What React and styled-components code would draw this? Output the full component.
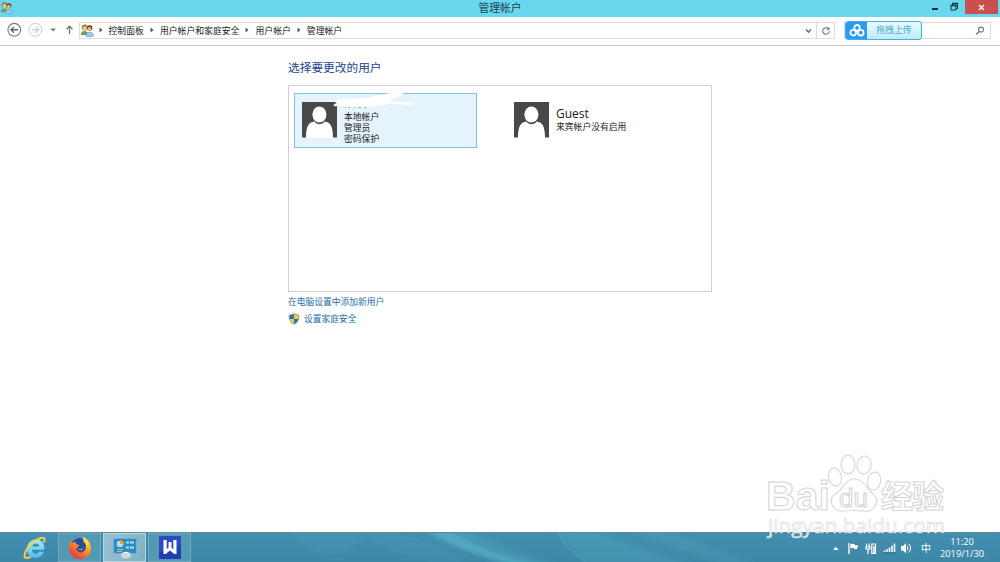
import React from 'react';
import styled, { createGlobalStyle } from 'styled-components';

const CRUMBS = ['控制面板', '用户帐户和家庭安全', '用户帐户', '管理帐户'];

export default function App() {
	return (
		<>
			<GlobalStyle />
			<Desktop>
				<TitleBar>
					<TitleIcon>
						<UsersIcon size={12} />
					</TitleIcon>
					<Title>管理帐户</Title>
					<WindowControls />
				</TitleBar>

				<NavBar>
					<NavButtons />
					<AddressBar>
						<Crumbs>
							<UsersIcon size={13} />
							{CRUMBS.map((crumb) => (
								<Crumb key={crumb}>
									<CrumbArrow viewBox='0 0 4 6'>
										<path d='M.5 .5L3.5 3L.5 5.5Z' />
									</CrumbArrow>
									{crumb}
								</Crumb>
							))}
						</Crumbs>
						<AddressButton $width={15}>
							<svg width='7' height='6' viewBox='0 0 7 6'>
								<path
									d='M1 1.5L3.5 4.2L6 1.5'
									fill='none'
									stroke='#666'
									strokeWidth='1.4'
								/>
							</svg>
						</AddressButton>
						<AddressButton $width={18} $divided>
							<svg width='10' height='10' viewBox='0 0 10 10'>
								<path
									d='M7.3 2.6A3.3 3.3 0 1 0 8.3 5'
									fill='none'
									stroke='#777'
									strokeWidth='1.1'
								/>
								<path d='M8.5 .8V4H5.4Z' fill='#777' />
							</svg>
						</AddressButton>
					</AddressBar>
					<SearchBox>
						<Upload>
							<UploadIcon>
								<svg width='16' height='13' viewBox='0 0 16 13'>
									<g fill='none' stroke='#fff' strokeWidth='1.8'>
										<circle cx='8' cy='3.8' r='2.8' />
										<circle cx='4.2' cy='8.7' r='2.8' />
										<circle cx='11.8' cy='8.7' r='2.8' />
									</g>
									<circle cx='8' cy='7.6' r='1' fill='#fff' />
								</svg>
							</UploadIcon>
							<UploadLabel>拖拽上传</UploadLabel>
						</Upload>
						<svg width='10' height='10' viewBox='0 0 10 10'>
							<circle
								cx='6'
								cy='3.6'
								r='2.5'
								fill='none'
								stroke='#777'
								strokeWidth='1.1'
							/>
							<path d='M4.1 5.5L1.2 8.6' stroke='#777' strokeWidth='1.5' />
						</svg>
					</SearchBox>
				</NavBar>

				<Content>
					<Heading>选择要更改的用户</Heading>
					<AccountList>
						<Account $selected>
							<Avatar />
							<AccountInfo $top={9}>
								<p>本地帐户</p>
								<p>管理员</p>
								<p>密码保护</p>
							</AccountInfo>
							<Scribble />
						</Account>
						<Account>
							<Avatar />
							<AccountInfo $top={4}>
								<AccountName>Guest</AccountName>
								<p>来宾帐户没有启用</p>
							</AccountInfo>
						</Account>
					</AccountList>
					<Link>在电脑设置中添加新用户</Link>
					<Link>
						<ShieldIcon />
						设置家庭安全
					</Link>
				</Content>

				<Taskbar>
					<TaskbarGlow />
					<TaskButton>
						<ExplorerIcon />
					</TaskButton>
					<TaskButton $open>
						<FirefoxIcon />
					</TaskButton>
					<TaskButton $open $active>
						<ControlPanelIcon />
					</TaskButton>
					<TaskButton $open>
						<WriterIcon />
					</TaskButton>
					<Tray>
						<TrayIcons />
						<Ime>中</Ime>
						<Clock>
							<span>11:20</span>
							<span>2019/1/30</span>
						</Clock>
					</Tray>
				</Taskbar>
				<Watermark />
			</Desktop>
		</>
	);
}

function UsersIcon({ size }) {
	return (
		<svg width={size} height={size} viewBox='0 0 13 13'>
			<path d='M0 10C0 6 7 6 7 10V11H0Z' fill='#6f9e54' />
			<circle cx='3.8' cy='3.4' r='3' fill='#9b7638' />
			<circle cx='3.8' cy='4.3' r='2.1' fill='#eccb8c' />
			<circle cx='8.7' cy='4' r='2.7' fill='#6d3f29' />
			<circle cx='8.4' cy='4.9' r='1.9' fill='#e7b78a' />
			<path
				d='M4.7 11.7C5 7.2 12.5 7 12.7 11.7L11.5 12.7H6Z'
				fill='#9bcbed'
				stroke='#5b91b8'
				strokeWidth='.6'
			/>
		</svg>
	);
}

function WindowControls() {
	return (
		<Controls>
			<svg width='6' height='13' viewBox='0 0 6 13'>
				<path d='M0 9H6' stroke='#17343c' strokeWidth='2' />
			</svg>
			<svg width='9' height='13' viewBox='0 0 9 13'>
				<path
					d='M2.5 5V3.5H7.5V8.5H6M1 5.5H6V10H1Z'
					fill='none'
					stroke='#17343c'
				/>
				<path d='M.5 5.5H6.5M2 3.5H8' stroke='#17343c' strokeWidth='1.3' />
			</svg>
			<CloseButton>
				<svg width='7' height='7' viewBox='0 0 7 7'>
					<path d='M1 1L6 6M6 1L1 6' stroke='#fff' strokeWidth='1.4' />
				</svg>
			</CloseButton>
		</Controls>
	);
}

function NavButtons() {
	return (
		<svg width='79' height='28' viewBox='0 0 79 28' fill='none'>
			<circle cx='14.3' cy='12.8' r='6.4' stroke='#777' strokeWidth='1.1' />
			<path
				d='M18 12.8H11.4M14 9.9L11 12.8L14 15.7'
				stroke='#666'
				strokeWidth='1.4'
			/>
			<circle cx='35.3' cy='12.8' r='6.4' stroke='#ccc' />
			<path
				d='M31.7 12.8H38.2M35.6 9.9L38.6 12.8L35.6 15.7'
				stroke='#ccc'
				strokeWidth='1.3'
			/>
			<path d='M50.3 11.5H56L53.1 14.4Z' fill='#777' />
			<path
				d='M69.5 17.3V9.5M66.5 12.3L69.5 9.2L72.5 12.3'
				stroke='#777'
				strokeWidth='1.3'
			/>
		</svg>
	);
}

function Avatar() {
	return (
		<svg width='35' height='36' viewBox='0 0 35 36'>
			<path d='M0 0H35V35.5H0Z' fill='#484848' />
			<path
				d='M4 36C4 25 6 20.3 12.5 19.5C15 23 20 23 22.7 19.5C29 20.3 31 25 31 36Z'
				fill='#fff'
			/>
			<ellipse cx='17.4' cy='12.5' rx='7' ry='8.1' fill='#fff' />
		</svg>
	);
}

function Scribble() {
	return (
		<ScribbleSvg width='84' height='20' viewBox='0 0 84 20'>
			<path
				d='M3 15L20 14L52 12L80 14'
				fill='none'
				stroke='#fff'
				strokeWidth='2.5'
				strokeLinecap='round'
			/>
			<path
				d='M7 9L35 8L58 3L71 2V5L60 9L58 14L35 17L7 16L3 12Z'
				fill='#fff'
			/>
			<path
				d='M13 17.5H14M17 17.5H18M22 17.5H23M26 17.5H29M32 17.5H34'
				stroke='#9da4a8'
			/>
		</ScribbleSvg>
	);
}

function ShieldIcon() {
	return (
		<svg width='12' height='12' viewBox='0 0 12 12'>
			<path
				d='M6 .3L11.3 2C11.5 7 10 10 6 11.8C2 10 .5 7 .7 2Z'
				fill='#8b9eaa'
			/>
			<path d='M6 1.2L1.6 2.5L1.7 6H6Z' fill='#2872b8' />
			<path d='M6 1.2L10.4 2.5L10.3 6H6Z' fill='#f3cf3c' />
			<path d='M1.7 6H6V10.8C3.5 9.5 2.1 8 1.7 6Z' fill='#f3cf3c' />
			<path d='M10.3 6H6V10.8C8.5 9.5 9.9 8 10.3 6Z' fill='#2872b8' />
		</svg>
	);
}

function ExplorerIcon() {
	return (
		<svg width='24' height='24' viewBox='0 0 24 24'>
			<defs>
				<linearGradient id='ie' x1='0' y1='0' x2='0' y2='1'>
					<stop offset='0' stopColor='#a5ecff' />
					<stop offset='1' stopColor='#4fbcf0' />
				</linearGradient>
			</defs>
			<path
				fillRule='evenodd'
				d='M21.3 13.7H9C9.3 18.4 14.4 19 16.2 15.8H20.9C18.9 20.6 15.4 22 12 21.7C6.7 21.2 3.8 17.4 4 12.7C4.3 7 8.1 3.6 13 3.6C18.5 3.6 21.8 7.5 21.3 13.7ZM9.2 10.5H16.5C16.2 6.6 9.8 6.4 9.2 10.5Z'
				fill='url(#ie)'
			/>
			<path
				d='M20.5 6.5C23.8 1.5 19.8 .5 14.3 3.4C7.8 6.8 1.8 14.7 1.5 19.5C1.4 22.8 5 22.4 8.3 20.5'
				fill='none'
				stroke='#f6cf42'
				strokeWidth='1.9'
			/>
		</svg>
	);
}

function FirefoxIcon() {
	return (
		<svg width='24' height='24' viewBox='0 0 24 24'>
			<defs>
				<linearGradient id='fox' x1='.9' y1='0' x2='.2' y2='1'>
					<stop offset='0' stopColor='#ffe14a' />
					<stop offset='.45' stopColor='#ff9a20' />
					<stop offset='1' stopColor='#e9244d' />
				</linearGradient>
			</defs>
			<circle cx='12' cy='11.5' r='9.5' fill='#264d9b' />
			<path
				d='M2 5L4.6 7L7 5.5L8 8L11.5 9.3L9.2 11.5L8.2 13C9.5 17.3 15 17.8 17.2 13.7C19 9.8 17.3 7.5 15.5 5.8L15 1C21.5 3.7 23.4 9 22.8 14C21.7 20 16.9 23 12 23C5.6 23 1 18.2 1 12C1 9 1.2 7 2 5Z'
				fill='url(#fox)'
			/>
			<path d='M15 1C14.4 5 19.8 6.5 18.8 12C23 9 20.5 3.4 15 1Z' fill='#ffdc42' />
			<path
				d='M9.6 12.3L12 13.2L15.2 12.2C14.3 14.5 11 15.3 9.6 12.3Z'
				fill='#ff9425'
			/>
		</svg>
	);
}

function ControlPanelIcon() {
	return (
		<svg width='24' height='22' viewBox='0 0 24 22'>
			<rect x='.5' y='1.5' width='23' height='15' rx='1' fill='#328bc0' stroke='#68b2da' />
			<circle cx='7' cy='7' r='3.3' fill='#b9dcec' />
			<path d='M7 7V3.2A3.6 3.6 0 0 1 10.7 7Z' fill='#ff9d28' />
			<path
				d='M13 5.5H16M17 5.5H21M13 10.5H16M17 10.5H21'
				stroke='#a6e3fa'
				strokeWidth='2'
			/>
			<path d='M4 12.5H10' stroke='#92cbe7' />
			<path d='M4 14.5H9' stroke='#efb344' />
			<ellipse cx='12.8' cy='18.3' rx='5' ry='3.3' fill='#d2d7da' />
			<path d='M9 17C11 14.5 15 15 16.5 17' fill='none' stroke='#fff' />
		</svg>
	);
}

function WriterIcon() {
	return (
		<svg width='22' height='23' viewBox='0 0 22 23'>
			<path d='M0 0H22V23H0Z' fill='#213fb0' />
			<path d='M0 0H22V10L0 16Z' fill='#2c4bc1' />
			<path
				d='M4.5 4H7.7V13.2L9.5 11.8V6H12.5V11.8L14.3 13.2V4H17.5V18H15.3L11 14.5L6.7 18H4.5Z'
				fill='#fff'
			/>
		</svg>
	);
}

function TrayIcons() {
	return (
		<svg width='80' height='16' viewBox='832 540 80 16'>
			<path d='M833 550L835.8 546.8L838.6 550Z' fill='#fff' />
			<path d='M849 543V554' stroke='#fff' strokeWidth='1.4' />
			<path
				d='M850 543.5H855V545H859L857.5 548L858 549.5H854V548.5H850Z'
				fill='#fff'
				stroke='#285c70'
				strokeWidth='.5'
			/>
			<g fill='none' stroke='#fff' strokeWidth='1.2'>
				<path d='M866.5 543.5V547M869 543.5V547M865.3 547H870V549H866V547M868 549V554' />
				<path d='M871.8 544H875.5V553.5H871.8Z' />
			</g>
			<path d='M873 546H875V553H873Z' fill='#d5e3e8' />
			<path
				d='M884.5 552V550.5M887 552V549M889.5 552V547.5M892 552V545.5M894.5 552V543.5'
				stroke='#e7f3f7'
				strokeWidth='1.7'
			/>
			<path d='M883 553H896' stroke='#285c70' strokeWidth='.6' />
			<path d='M901 546H903L906 543V553.5L903 550.5H901Z' fill='#fff' />
			<path
				d='M907.2 546Q909 548.2 907.2 550.5M908.8 544Q912.5 548.3 908.8 552.5'
				fill='none'
				stroke='#fff'
			/>
		</svg>
	);
}

function TaskbarGlow() {
	return (
		<GlowSvg viewBox='0 0 1000 29' preserveAspectRatio='none'>
			<defs>
				<filter id='soft' x='-20%' y='-20%' width='140%' height='140%'>
					<feGaussianBlur stdDeviation='2' />
				</filter>
			</defs>
			<g fill='#55b2c7' filter='url(#soft)'>
				<path d='M425 -3H446C474 12 504 24 543 32H513C477 23 445 10 425 -3Z' opacity='.75' />
				<path d='M442 -3H470C495 12 530 25 562 32H543C502 20 475 10 442 -3Z' opacity='.25' />
				<path d='M554 -3H595C630 12 660 24 700 32H588Z' opacity='.25' />
				<path d='M625 -3H665L760 32H720Z' opacity='.15' />
			</g>
			<path d='M290 0Q333 43 367 0Z' fill='#52a8c8' opacity='.15' />
			<path d='M365 0Q386 20 430 29H464Q440 10 396 0Z' fill='#52a8c8' opacity='.15' />
			<path d='M558 0Q565 15 586 29' stroke='#79c1d1' opacity='.4' fill='none' />
		</GlowSvg>
	);
}

function Watermark() {
	return (
		<WatermarkSvg width='190' height='90' viewBox='760 450 190 90'>
			<g fill='#fff' fillOpacity='.8' stroke='#d9d9d9' strokeWidth='1.2'>
				<ellipse cx='835' cy='477' rx='6.5' ry='9' transform='rotate(-12 835 477)' />
				<ellipse cx='848' cy='464.5' rx='7' ry='9.3' />
				<ellipse cx='864' cy='465' rx='7' ry='9' transform='rotate(10 864 465)' />
				<ellipse cx='874' cy='481' rx='6.7' ry='9' transform='rotate(12 874 481)' />
				<path d='M853 479C861 478 865 485 870 491C877 497 879 501 874 508C870 513 864 511 854 510C844 511 837 513 833 507C829 499 832 496 839 491C843 487 846 480 853 479Z' />
			</g>
			<WatermarkText x='766' y='510' fontSize='41' textLength='64'>
				Bai
			</WatermarkText>
			<WatermarkText x='839' y='507' fontSize='26' textLength='29' $thin>
				du
			</WatermarkText>
			<WatermarkText x='881' y='508' fontSize='32' textLength='63' $cjk>
				经验
			</WatermarkText>
			<WatermarkUrl x='768' y='533' textLength='177' lengthAdjust='spacingAndGlyphs'>
				jingyan.baidu.com
			</WatermarkUrl>
		</WatermarkSvg>
	);
}

const GlobalStyle = createGlobalStyle`
	* {
		box-sizing: border-box;
	}

	body {
		margin: 0;
		font-family: 'Noto Sans', 'Noto Sans CJK SC', sans-serif;
	}

	p {
		margin: 0;
	}

	svg {
		display: block;
		flex-shrink: 0;
	}
`;

const Desktop = styled.div`
	position: relative;
	display: flex;
	flex-direction: column;
	width: 1000px;
	height: 562px;
	overflow: hidden;
	background: #fff;
`;

const TitleBar = styled.header`
	display: grid;
	grid-template-columns: 1fr auto 1fr;
	height: 17px;
	background: #69d8ee;
`;

const TitleIcon = styled.div`
	padding: 2px 1px;
`;

const Title = styled.h1`
	margin: 0;
	color: #20454f;
	font: 400 10.8px/15px 'Noto Sans CJK SC', sans-serif;
`;

const Controls = styled.div`
	display: flex;
	justify-content: flex-end;
	gap: 12px;
`;

const CloseButton = styled.div`
	display: flex;
	align-items: center;
	justify-content: center;
	width: 33px;
	height: 14px;
	margin-left: -6px;
	margin-right: 2px;
	background: #c9504f;
`;

const NavBar = styled.nav`
	display: flex;
	height: 29px;
	border-bottom: 1px solid #c8c8c8;
`;

const AddressBar = styled.div`
	display: flex;
	width: 756px;
	height: 17px;
	margin-top: 5px;
	border: 1px solid #dcdcdc;
`;

const Crumbs = styled.div`
	display: flex;
	align-items: center;
	flex: 1;
	padding-left: 1px;
`;

const Crumb = styled.span`
	display: flex;
	align-items: center;
	height: 15px;
	padding-bottom: 1px;
	color: #222;
	font: 400 8.85px/13px 'Noto Sans CJK SC', sans-serif;

	&:nth-of-type(1) {
		margin-left: -1.5px;
	}
`;

const CrumbArrow = styled.svg`
	width: 4px;
	height: 6px;
	margin: 0 6px;
	fill: #555;
`;

const AddressButton = styled.div`
	display: flex;
	align-items: center;
	justify-content: center;
	width: ${({ $width }) => $width}px;
	border-left: ${({ $divided }) => ($divided ? '1px solid #dcdcdc' : '0')};
`;

const SearchBox = styled.div`
	display: flex;
	align-items: center;
	justify-content: space-between;
	width: 147px;
	height: 17px;
	margin: 5px 0 0 9px;
	padding-right: 5px;
	border: 1px solid #dcdcdc;
`;

const Upload = styled.div`
	display: flex;
	width: 77px;
	height: 19px;
	border: 1px solid #48aee0;
	border-radius: 3px;
	overflow: hidden;
	background: linear-gradient(#e8faff, #bdecfa);
`;

const UploadIcon = styled.div`
	display: flex;
	align-items: center;
	justify-content: center;
	width: 21px;
	background: #289cf3;
`;

const UploadLabel = styled.span`
	flex: 1;
	color: #4aabce;
	text-align: center;
	font: 400 8.9px/16px 'Noto Sans CJK SC', sans-serif;
`;

const Content = styled.main`
	flex: 1;
	padding: 12px 0 0 288px;
`;

const Heading = styled.h2`
	margin: 0 0 9px;
	color: #214494;
	font: 400 11.7px/18px 'Noto Sans CJK SC', sans-serif;
`;

const AccountList = styled.section`
	display: grid;
	grid-template-columns: 183px 184px;
	align-items: start;
	gap: 29px;
	width: 424px;
	height: 207px;
	margin-bottom: 2px;
	padding: 7px 5px;
	border: 1px solid #cfcfcf;
`;

const Account = styled.article`
	position: relative;
	display: flex;
	gap: 7px;
	height: 55px;
	padding: 8px 0 0 7px;
	border: 1px solid ${({ $selected }) => ($selected ? '#7fc2dd' : 'transparent')};
	background: ${({ $selected }) => ($selected ? '#e5f3fa' : 'transparent')};
`;

const AccountInfo = styled.div`
	margin-top: ${({ $top }) => $top}px;
	color: #222;
	font: 400 8.8px/11px 'Noto Sans CJK SC', sans-serif;
`;

const AccountName = styled.h3`
	margin: 0;
	font: 400 12px/15px 'Open Sans', sans-serif;
`;

const ScribbleSvg = styled.svg`
	position: absolute;
	left: 37px;
	top: -4px;
`;

const Link = styled.a`
	display: flex;
	align-items: center;
	gap: 4px;
	height: 16.5px;
	color: #2670ad;
	font: 400 8.75px/16px 'Noto Sans CJK SC', sans-serif;
`;

const Taskbar = styled.footer`
	position: relative;
	display: flex;
	gap: 2px;
	height: 30px;
	padding-left: 13px;
	border-top: 1px solid #5f8a9b;
	background: linear-gradient(#438fb1, #3d87a7);
`;

const GlowSvg = styled.svg`
	position: absolute;
	inset: 0;
	width: 1000px;
	height: 29px;
`;

const TaskButton = styled.div`
	position: relative;
	display: flex;
	align-items: center;
	justify-content: center;
	width: 43px;
	height: 29px;
	border: 1px solid
		${({ $open, $active }) =>
			$active ? '#b5d6e1' : $open ? '#70a9bd' : 'transparent'};
	background: ${({ $open, $active }) =>
		$active
			? 'linear-gradient(120deg, #9ac3d1, #7fb1c3)'
			: $open
				? '#5499b4'
				: 'transparent'};
`;

const Tray = styled.div`
	position: relative;
	display: flex;
	align-items: center;
	width: 168px;
	margin-left: auto;
	color: #fff;
`;

const Ime = styled.span`
	width: 24px;
	padding-left: 9px;
	font: 400 10px/16px 'Noto Sans CJK SC', sans-serif;
`;

const Clock = styled.div`
	display: flex;
	flex-direction: column;
	align-items: center;
	width: 48px;
	margin-left: 2px;
	padding-top: 1px;
	font: 400 9.3px/12px 'Open Sans', sans-serif;
`;

const WatermarkSvg = styled.svg`
	position: absolute;
	left: 760px;
	top: 450px;
`;

const WatermarkText = styled.text`
	fill: #fff;
	fill-opacity: 0.8;
	stroke: #d6d6d6;
	stroke-width: 1.1px;
	font-family: ${({ $cjk }) =>
		$cjk ? "'Noto Sans CJK SC'" : "'Liberation Sans'"}, sans-serif;
	font-weight: ${({ $thin }) => ($thin ? 400 : 700)};
`;

const WatermarkUrl = styled.text`
	fill: #fff;
	fill-opacity: 0.85;
	stroke: #d9d9d9;
	stroke-width: 0.6px;
	font: 400 20.5px 'Open Sans', sans-serif;
`;
